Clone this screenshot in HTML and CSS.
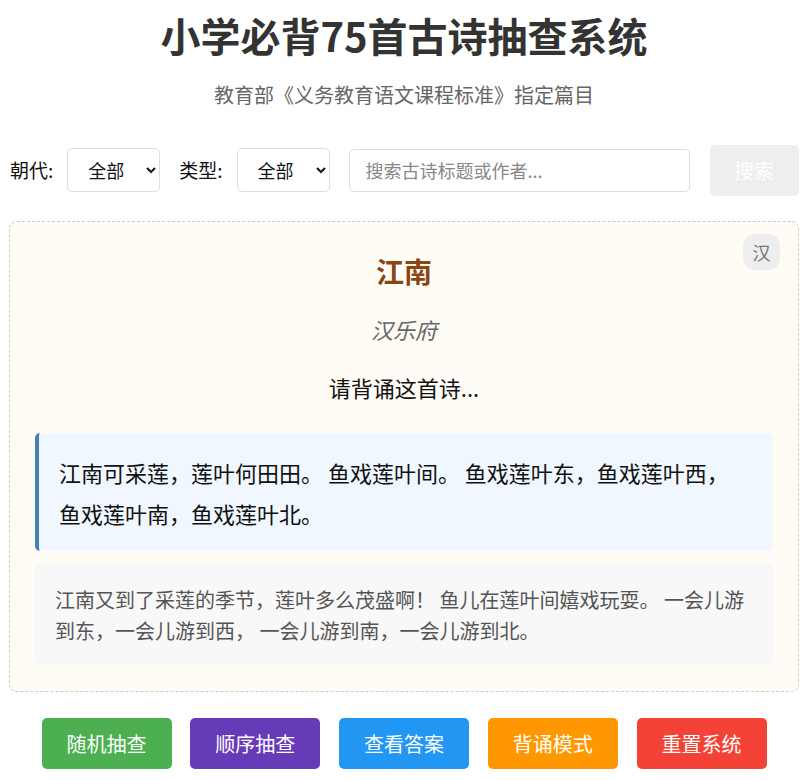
FILE: index.html
```html
<!DOCTYPE html>
<html lang="zh-CN">
<head>
<meta charset="utf-8">
<title>小学必背75首古诗抽查系统</title>
<link rel="stylesheet" href="styles.css">
</head>
<body>
<div class="page">
  <h1 class="title">小学必背75首古诗抽查系统</h1>
  <p class="subtitle">教育部《义务教育语文课程标准》指定篇目</p>

  <div class="controls">
    <div class="field">
      <label class="label">朝代:</label>
      <select class="select">
        <option>全部</option>
      </select>
    </div>
    <div class="field">
      <label class="label">类型:</label>
      <select class="select">
        <option>全部</option>
      </select>
    </div>
    <input class="search" type="text" placeholder="搜索古诗标题或作者...">
    <button class="search-btn">搜索</button>
  </div>

  <div class="card">
    <span class="badge">汉</span>
    <h2 class="poem-title">江南</h2>
    <p class="author">汉乐府</p>
    <p class="prompt">请背诵这首诗...</p>
    <div class="poem">江南可采莲，莲叶何田田。 鱼戏莲叶间。 鱼戏莲叶东，鱼戏莲叶西，鱼戏莲叶南，鱼戏莲叶北。</div>
    <div class="translation">江南又到了采莲的季节，莲叶多么茂盛啊！ 鱼儿在莲叶间嬉戏玩耍。 一会儿游到东，一会儿游到西， 一会儿游到南，一会儿游到北。</div>
  </div>

  <div class="actions">
    <button class="btn btn-green">随机抽查</button>
    <button class="btn btn-purple">顺序抽查</button>
    <button class="btn btn-blue">查看答案</button>
    <button class="btn btn-orange">背诵模式</button>
    <button class="btn btn-red">重置系统</button>
  </div>
</div>
</body>
</html>
```

FILE: styles.css
```css
* {
  box-sizing: border-box;
}

html, body {
  margin: 0;
  padding: 0;
  background: #ffffff;
}

body {
  font-family: "Noto Sans CJK SC", "Noto Sans", "Liberation Sans", sans-serif;
  color: #222;
}

.page {
  padding: 0 10px 0 9px;
}

.title {
  margin: 6px 0 0;
  font-size: 40px;
  line-height: 58px;
  font-weight: 700;
  color: #333;
  text-align: center;
}

.subtitle {
  margin: 16px 0 0;
  font-size: 20px;
  line-height: 30px;
  color: #666;
  text-align: center;
}

.controls {
  margin-top: 35px;
  display: flex;
  align-items: center;
  gap: 19px;
  padding-left: 1px;
}

.field {
  display: flex;
  align-items: center;
  gap: 14px;
}

.label {
  font-size: 19px;
  color: #111;
  margin-top: -2px;
}

.select {
  width: 93px;
  height: 44px;
  margin-top: -2px;
  padding: 0 10px 0 16px;
  font-family: inherit;
  font-size: 18px;
  color: #111;
  background: #fff;
  border: 1px solid #ddd;
  border-radius: 5px;
}

.search {
  width: 341px;
  height: 43px;
  margin-top: -1px;
  padding: 0 16px;
  font-family: inherit;
  font-size: 18px;
  border: 1px solid #ddd;
  border-radius: 5px;
  color: #333;
}

.search::placeholder {
  color: #888;
}

.search-btn {
  margin-left: 1px;
  width: 89px;
  height: 51px;
  font-family: inherit;
  font-size: 20px;
  color: #fff;
  background: #eeeeee;
  border: none;
  border-radius: 5px;
}

.card {
  position: relative;
  margin-top: 25px;
  padding: 25px 25px 26px;
  background: #fffcf5;
  border: 1px dashed #ccc;
  border-radius: 8px;
  text-align: center;
}

.badge {
  position: absolute;
  top: 12px;
  right: 18px;
  width: 37px;
  height: 36px;
  line-height: 36px;
  text-align: center;
  font-size: 18px;
  color: #777;
  background: #eeeeee;
  border-radius: 12px;
}

.poem-title {
  margin: 4px 0 0;
  font-size: 28px;
  line-height: 40px;
  font-weight: 700;
  color: #8b4513;
}

.author {
  margin: 23px 0 0;
  font-size: 22px;
  line-height: 30px;
  font-style: italic;
  color: #666;
}

.prompt {
  margin: 28px 0 0;
  font-size: 22px;
  line-height: 30px;
  color: #111;
}

.poem {
  margin-top: 31px;
  padding: 19px 28px 17px 20px;
  text-align: left;
  font-size: 22px;
  line-height: 41px;
  color: #111;
  background: #f0f7ff;
  border-left: 4px solid #4682b4;
  border-radius: 5px;
}

.translation {
  margin-top: 13px;
  padding: 20px 20px 19px 20px;
  text-align: left;
  font-size: 20px;
  line-height: 31px;
  color: #555;
  background: #f8f8f8;
  border-radius: 5px;
}

.actions {
  margin-top: 26px;
  display: flex;
  justify-content: center;
  gap: 18.75px;
}

.btn {
  width: 130px;
  height: 51px;
  font-family: inherit;
  font-size: 20px;
  color: #fff;
  border: none;
  border-radius: 5px;
}

.btn-green { background: #4caf50; }
.btn-purple { background: #673ab7; }
.btn-blue { background: #2196f3; }
.btn-orange { background: #ff9800; }
.btn-red { background: #f44336; }
```
